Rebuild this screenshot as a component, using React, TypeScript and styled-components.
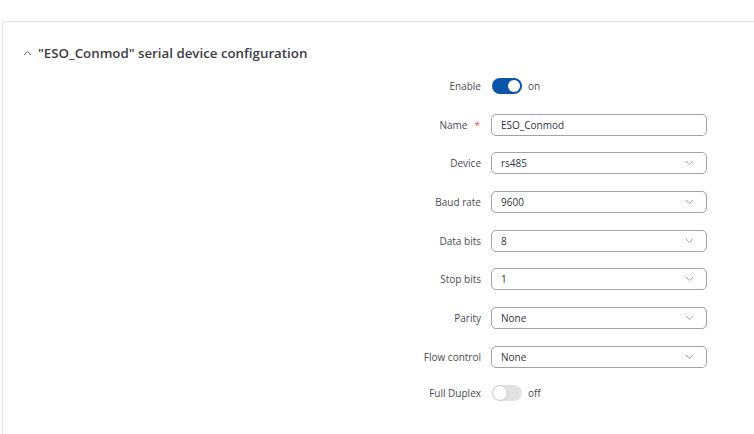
import React from "react";
import styled, { createGlobalStyle } from "styled-components";

const Global = createGlobalStyle`
  html, body { margin: 0; padding: 0; background: #ffffff; }
  body { font-family: "Open Sans", "Noto Sans", sans-serif; color: #404048; overflow: hidden; }
  * { box-sizing: border-box; }
`;

const Page = styled.div`
  padding: 21px 0 0 2px;
  height: 434px;
`;

const Card = styled.section`
  border: 1px solid #e4e4e4;
  border-right: none;
  border-bottom: none;
  border-radius: 3px 0 0 0;
  height: 420px;
  padding-top: 21px;
`;

const Header = styled.div`
  display: flex;
  align-items: center;
  gap: 6px;
  padding-left: 20px;
  height: 20px;
`;

const Title = styled.h2`
  margin: 0;
  font-size: 13.3px;
  font-weight: 600;
  color: #3c3c46;
`;

const Form = styled.div`
  display: grid;
  grid-template-columns: 478px 216px;
  grid-template-rows: repeat(8, 22px) 16px;
  column-gap: 10px;
  row-gap: 16.7px;
  margin-top: 12px;
`;

const Label = styled.label`
  display: flex;
  align-items: center;
  justify-content: flex-end;
  font-size: 10px;
  color: #4a4a55;
  white-space: nowrap;
`;

const Required = styled.span`
  color: #e0524f;
  margin-left: 7px;
  margin-right: 1px;
`;

const Field = styled.div`
  display: flex;
  align-items: center;
  height: 22px;
  border: 1px solid #a2a2a8;
  border-radius: 5px;
  padding: 0 12px 0 9px;
  font-size: 10px;
  color: #33333b;
  justify-content: space-between;
`;

const ToggleWrap = styled.div`
  display: flex;
  align-items: center;
  gap: 6px;
  font-size: 10px;
  color: #4a4a55;
  padding-left: 1px;
`;

const Track = styled.span<{ $on: boolean }>`
  position: relative;
  width: 30px;
  height: 16px;
  border-radius: 8px;
  background: ${(p) => (p.$on ? "#0b55a8" : "#e2e2e4")};
`;

const Knob = styled.span<{ $on: boolean }>`
  position: absolute;
  top: ${(p) => (p.$on ? "2px" : "1px")};
  left: ${(p) => (p.$on ? "16px" : "1px")};
  width: ${(p) => (p.$on ? "12px" : "14px")};
  height: ${(p) => (p.$on ? "12px" : "14px")};
  border-radius: 50%;
  background: #ffffff;
  box-shadow: ${(p) => (p.$on ? "none" : "0 0 2px rgba(0,0,0,0.3)")};
`;

const Toggle = ({ on }: { on: boolean }) => (
  <ToggleWrap>
    <Track $on={on}>
      <Knob $on={on} />
    </Track>
    <span>{on ? "on" : "off"}</span>
  </ToggleWrap>
);

const Chevron = () => (
  <svg width="9" height="6" viewBox="0 0 9 6">
    <polyline points="1,1 4.5,4.5 8,1" fill="none" stroke="#a8a8ae" strokeWidth="1" />
  </svg>
);

const Select = ({ value }: { value: string }) => (
  <Field>
    <span>{value}</span>
    <Chevron />
  </Field>
);

const selects: [string, string][] = [
  ["Device", "rs485"],
  ["Baud rate", "9600"],
  ["Data bits", "8"],
  ["Stop bits", "1"],
  ["Parity", "None"],
  ["Flow control", "None"],
];

export default function App() {
  return (
    <>
      <Global />
      <Page>
        <Card>
          <Header>
            <svg width="9" height="6" viewBox="0 0 9 6">
              <polyline points="1,5 4.5,1.5 8,5" fill="none" stroke="#6a6a72" strokeWidth="1" />
            </svg>
            <Title>"ESO_Conmod" serial device configuration</Title>
          </Header>
          <Form>
            <Label>Enable</Label>
            <Toggle on={true} />
            <Label>
              Name<Required>*</Required>
            </Label>
            <Field>
              <span>ESO_Conmod</span>
            </Field>
            {selects.map(([l, v]) => (
              <React.Fragment key={l}>
                <Label>{l}</Label>
                <Select value={v} />
              </React.Fragment>
            ))}
            <Label>Full Duplex</Label>
            <Toggle on={false} />
          </Form>
        </Card>
      </Page>
    </>
  );
}
